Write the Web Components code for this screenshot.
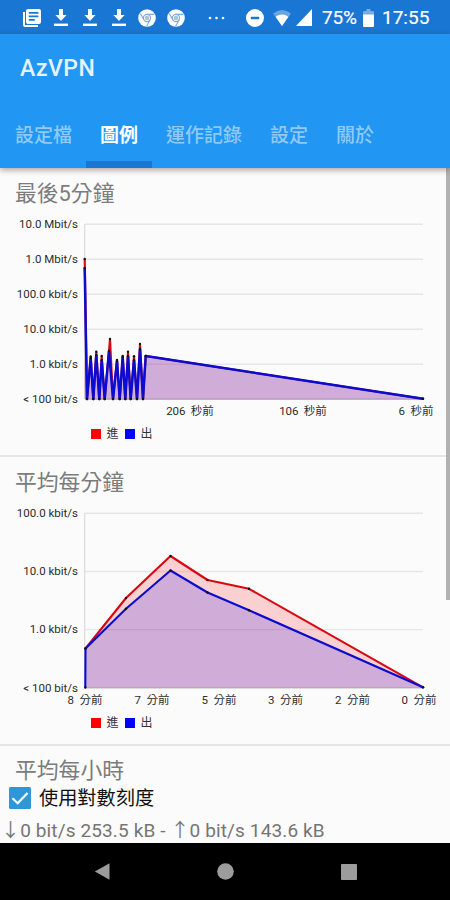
<!DOCTYPE html>
<html lang="zh-Hant">
<head>
<meta charset="utf-8">
<title>AzVPN</title>
<style>
    html, body {
        margin: 0;
        height: 100%;
        overflow: hidden;
    }

    body {
        background: #fbfbfb;
        font-family: Roboto, "Noto Sans CJK TC", sans-serif;
    }
</style>
</head>
<body>
<vpn-app></vpn-app>

<script>
class StatusBar extends HTMLElement {
    constructor() {
        super();
        this.root = this.attachShadow({ mode: 'open' });

        const download = `
            <svg class='download' width='14' height='20' viewBox='0 0 14 20'>
                <path d='M5 1h4v6h3.6L7 13 1.4 7H5z'/><path d='M0 15.6h14V18H0z'/>
            </svg>`;
        const chrome = `
            <svg class='chrome' width='18' height='18' viewBox='0 0 18 18'>
                <circle cx='9' cy='9' r='8.8'/>
                <g fill='none' stroke='#7fa9d6' stroke-width='1.1'>
                    <circle cx='9' cy='9' r='3.6'/>
                    <path d='M9 5.4h7.4M5.9 10.8 2.3 4.6M12.1 10.8 8.6 17.2'/>
                </g>
                <circle cx='9' cy='9' r='2.3' fill='#a9c3df'/>
            </svg>`;

        this.root.innerHTML = `
            <style>
                :host {
                    display: flex;
                    align-items: center;
                    flex: none;
                    height: 34px;
                    padding: 1px 0 0 23px;
                    box-sizing: border-box;
                    background: #1976d2;
                    color: #fff;
                    font-size: 19px;
                    line-height: 20px;
                    -webkit-text-stroke: 0.2px #fff;
                }

                svg { flex: none; fill: #fff; }
                .news { margin-right: 13px; }
                .download { margin-right: 15px; }
                .download.last { margin-right: 12px; }
                .chrome { margin-right: 11px; }
                .dots { margin: 0 21px 0 12px; }
                .dnd { margin-right: 9px; }
                .wifi { margin-right: 5px; }
                .signal { margin-right: 10px; }
                .percent { width: 41px; letter-spacing: -0.2px; }
                .battery { margin-right: 8px; }
            </style>

            <svg class='news' width='18' height='18' viewBox='0 0 18 18'>
                <path d='M0 3h2v13h13v2H2q-2 0-2-2z'/>
                <path fill-rule='evenodd' d='M5 0h11q2 0 2 2v11q0 2-2 2H5q-2 0-2-2V2q0-2 2-2zm.8 3v1.8h9.6V3zm0 3.6v1.6h9.6V6.6zm0 3.5v1.6h6v-1.6z'/>
            </svg>
            ${download}${download}${download.replace("'download'", "'download last'")}${chrome}${chrome}
            <svg class='dots' width='17' height='4' viewBox='0 0 17 4'>
                <circle cx='2' cy='2' r='1.3'/><circle cx='8.5' cy='2' r='1.3'/><circle cx='15' cy='2' r='1.3'/>
            </svg>
            <svg class='dnd' width='18' height='18' viewBox='0 0 18 18'>
                <path fill-rule='evenodd' d='M9 0a9 9 0 1 0 0 18A9 9 0 1 0 9 0zM4.8 7.8h8.4v2.4H4.8z'/>
            </svg>
            <svg class='wifi' width='18' height='16' viewBox='0 0 18 16'>
                <path opacity='.35' d='M0 3.5Q9-3.5 18 3.5L9 16z'/>
                <path d='M2.6 6.7Q9 2.3 15.4 6.7L9 16z'/>
            </svg>
            <svg class='signal' width='16' height='17' viewBox='0 0 16 17'>
                <path d='M16 0v17H0z'/>
            </svg>
            <span class='percent'>75%</span>
            <svg class='battery' width='11' height='18' viewBox='0 0 11 18'>
                <path opacity='.4' d='M3.5 0h4v2H10q1 0 1 1v3H0V3q0-1 1-1h2.5z'/>
                <path d='M0 5.5h11V17q0 1-1 1H1q-1 0-1-1z'/>
            </svg>
            <span>17:55</span>
        `;
    }
}

class AppBar extends HTMLElement {
    constructor() {
        super();
        this.root = this.attachShadow({ mode: 'open' });
        this.root.innerHTML = `
            <style>
                :host {
                    display: flex;
                    flex-direction: column;
                    flex: none;
                    height: 133.5px;
                    background: #2196f3;
                    box-shadow: 0 2px 6px rgba(60, 30, 20, 0.4);
                    position: relative;
                    z-index: 1;
                }

                h1 {
                    margin: 0;
                    padding: 0 20px;
                    font-size: 23px;
                    font-weight: 500;
                    line-height: 70px;
                    letter-spacing: 0.5px;
                    color: #e4f3fe;
                }

                nav {
                    display: flex;
                    flex: 1;
                    padding-left: 1px;
                }
            </style>

            <h1><slot name='title'></slot></h1>
            <nav><slot></slot></nav>
        `;
    }
}

class AppTab extends HTMLElement {
    constructor() {
        super();
        this.root = this.attachShadow({ mode: 'open' });
        this.root.innerHTML = `
            <style>
                :host {
                    display: block;
                    padding: 0 14px;
                    font-size: 19px;
                    font-weight: 500;
                    line-height: 63px;
                    white-space: nowrap;
                    color: #90caf9;
                }

                :host([selected]) {
                    box-shadow: inset 0 -7px #1976d2;
                    font-weight: 700;
                    color: #fff;
                }
            </style>

            <slot></slot>
        `;
    }
}

class ChartCard extends HTMLElement {
    constructor() {
        super();
        this.root = this.attachShadow({ mode: 'open' });
        this.root.innerHTML = `
            <style>
                :host {
                    display: flex;
                    flex-direction: column;
                    flex: none;
                    box-sizing: border-box;
                    border-bottom: 2px solid #e6e6e6;
                }

                h2 {
                    margin: 0;
                    padding: 0 15px;
                    font-size: 21.8px;
                    font-weight: 400;
                    line-height: 32px;
                    color: #7c7c7c;
                }
            </style>

            <h2><slot name='title'></slot></h2>
            <slot></slot>
        `;
    }
}

// Plot area of both charts, y is relative to the top grid line
const LEFT = 85;
const RIGHT = 423;
const TOP = 14;

const CHARTS = {
    minutes: {
        height: 175,
        stroke: 2.5,
        rows: ['10.0 Mbit/s', '1.0 Mbit/s', '100.0 kbit/s', '10.0 kbit/s', '1.0 kbit/s', '< 100 bit/s'],
        columns: [[190, '206 秒前'], [303, '106 秒前'], [416, '6 秒前']],
        incoming: [
            [84.7, 35], [87, 175], [90.7, 132.5], [93.3, 175], [96.3, 127.7], [99.3, 175], [101.7, 132],
            [104.7, 175], [110, 115], [113, 175], [117, 136], [119.7, 175], [122.7, 132], [125.3, 175],
            [128, 127.7], [130.7, 175], [134, 132.3], [137, 175], [140, 120], [143, 175], [145.7, 132], [423, 174.8]
        ],
        outgoing: [
            [84.7, 44], [87, 175], [90.7, 134], [93.3, 175], [96.3, 131], [99.3, 175], [101.7, 136],
            [104.7, 175], [109, 127], [113, 175], [117, 137], [119.7, 175], [122.7, 133], [125.3, 175],
            [128, 132], [130.7, 175], [134, 136], [137, 175], [140, 125], [143, 175], [145.7, 132], [423, 174.8]
        ]
    },
    average: {
        height: 174.5,
        stroke: 2.1,
        rows: ['100.0 kbit/s', '10.0 kbit/s', '1.0 kbit/s', '< 100 bit/s'],
        columns: [[85, '8 分前'], [152, '7 分前'], [219, '5 分前'], [285.5, '3 分前'], [352.5, '2 分前'], [419, '0 分前']],
        incoming: [[85.5, 135.5], [126, 85], [170.5, 43], [207.5, 67], [249, 75.8], [423, 174.3]],
        outgoing: [[85.3, 174.5], [85.5, 135.5], [126, 95.8], [170.5, 57.5], [207.5, 79.5], [249, 97.3], [423, 174.3]]
    }
};

class TrafficChart extends HTMLElement {
    constructor() {
        super();
        this.root = this.attachShadow({ mode: 'open' });
    }

    connectedCallback() {
        const { height, stroke, rows, columns, incoming, outgoing } = CHARTS[this.getAttribute('data')];
        const bottom = TOP + height;
        const step = height / (rows.length - 1);

        const points = function(series) {
            return series.map(([x, y]) => `${x},${y + TOP}`).join(' ');
        };
        const area = function(series, color) {
            return `
                <polygon fill='${color}' fill-opacity='.17' points='${series[0][0]},${bottom} ${points(series)} ${RIGHT},${bottom}'/>`;
        };
        const line = function(series, color, width) {
            return `<polyline fill='none' stroke='${color}' stroke-width='${width}' stroke-linejoin='bevel' points='${points(series)}'/>`;
        };
        const dots = function(series) {
            return series.map(([x, y]) => `<circle cx='${x}' cy='${y + TOP}' r='1.2' fill='#111'/>`).join('');
        };

        const grid = rows.map((label, i) => {
            const y = TOP + i * step;
            return `
                <path d='M${LEFT} ${y + 0.3}H${RIGHT}' stroke='#e6e6e6' stroke-width='1.4'/>
                <text x='78' y='${y + 4}' text-anchor='end'>${label.replace('<', '&lt;')}</text>`;
        }).join('');
        const labels = columns.map(([x, label]) =>
            `<text class='column' x='${x}' y='${bottom + 16}' text-anchor='middle'>${label}</text>`).join('');

        this.root.innerHTML = `
            <style>
                :host { display: block; }

                svg { display: block; }

                text {
                    font-size: 11.5px;
                    fill: #2c2c2c;
                }

                .column { word-spacing: 2.5px; }

                .legend {
                    display: flex;
                    align-items: center;
                    height: 24px;
                    padding-left: 91px;
                    font-size: 12px;
                    line-height: 24px;
                    color: #333;
                }

                .legend i {
                    width: 9.5px;
                    height: 9.5px;
                    margin-right: 6px;
                }

                .legend span { width: 18.5px; }
            </style>

            <svg width='450' height='${Math.round(bottom) + 23}'>
                ${grid}
                <path d='M${LEFT - 0.3} ${TOP}V${bottom}' stroke='#d6d6d6'/>
                ${area(incoming, '#f00')}
                ${area(outgoing, '#00f')}
                <path d='M${LEFT} ${bottom + 0.3}H${RIGHT}' stroke='#9a8ba3' stroke-width='.7'/>
                ${line(incoming, '#d80812', 2.1)}${dots(incoming)}
                ${line(outgoing, '#0c0cd0', stroke)}${dots(outgoing)}
                ${labels}
            </svg>
            <div class='legend'>
                <i style='background: #f00'></i><span>進</span>
                <i style='background: #00f'></i><span>出</span>
            </div>
        `;
    }
}

class CheckOption extends HTMLElement {
    constructor() {
        super();
        this.root = this.attachShadow({ mode: 'open' });
        this.root.innerHTML = `
            <style>
                :host {
                    display: flex;
                    align-items: center;
                    flex: none;
                    height: 32px;
                    padding-left: 9px;
                    font-size: 19.2px;
                    line-height: 30px;
                    color: #111;
                }

                svg { margin-right: 8px; }

                span { padding-top: 2px; }
            </style>

            <svg width='22' height='22' viewBox='0 0 22 22'>
                <rect width='22' height='22' rx='1.5' fill='#2e97d8'/>
                <path d='M3.5 11.2 8.7 16.3 18.5 6' fill='none' stroke='#fff' stroke-width='2.2'/>
            </svg>
            <span><slot></slot></span>
        `;
    }
}

class SpeedLine extends HTMLElement {
    constructor() {
        super();
        this.root = this.attachShadow({ mode: 'open' });
        this.root.innerHTML = `
            <style>
                :host {
                    display: block;
                    flex: none;
                    height: 29px;
                    padding-left: 1px;
                    font-size: 19px;
                    line-height: 33px;
                    letter-spacing: 0.13px;
                    white-space: nowrap;
                    color: #757575;
                }
            </style>

            <slot></slot>
        `;
    }
}

class NavBar extends HTMLElement {
    constructor() {
        super();
        this.root = this.attachShadow({ mode: 'open' });
        this.root.innerHTML = `
            <style>
                :host {
                    display: flex;
                    align-items: center;
                    justify-content: space-between;
                    flex: none;
                    height: 57px;
                    padding: 0 93px 0 94px;
                    box-sizing: border-box;
                    background: #000;
                }

                svg { fill: #9c9c9c; }
            </style>

            <svg width='16' height='17' viewBox='0 0 16 17'><path d='M15.5 .3v16.4L.8 8.5z'/></svg>
            <svg width='17' height='17' viewBox='0 0 17 17'><circle cx='8.5' cy='8.5' r='8.3'/></svg>
            <svg width='16' height='16' viewBox='0 0 16 16'><rect width='16' height='16' rx='1'/></svg>
        `;
    }
}

class VpnApp extends HTMLElement {
    constructor() {
        super();
        this.root = this.attachShadow({ mode: 'open' });
        this.root.innerHTML = `
            <style>
                :host {
                    display: flex;
                    flex-direction: column;
                    width: 450px;
                    height: 900px;
                    overflow: hidden;
                }

                main {
                    display: flex;
                    flex-direction: column;
                    flex: 1;
                    min-height: 0;
                    padding-top: 10.5px;
                    overflow: hidden;
                    position: relative;
                }

                .first { height: 279px; margin-bottom: 10px; }
                .second { height: 279px; margin-bottom: 8.5px; }
                .third { height: 27px; border: 0; }

                .scrollbar {
                    position: absolute;
                    top: 0;
                    right: 0;
                    width: 4px;
                    height: 432px;
                    background: #b1b1b1;
                }
            </style>

            <status-bar></status-bar>
            <app-bar>
                <span slot='title'>AzVPN</span>
                <app-tab>設定檔</app-tab>
                <app-tab selected>圖例</app-tab>
                <app-tab>運作記錄</app-tab>
                <app-tab>設定</app-tab>
                <app-tab>關於</app-tab>
            </app-bar>
            <main>
                <chart-card class='first'>
                    <span slot='title'>最後5分鐘</span>
                    <traffic-chart data='minutes'></traffic-chart>
                </chart-card>
                <chart-card class='second'>
                    <span slot='title'>平均每分鐘</span>
                    <traffic-chart data='average'></traffic-chart>
                </chart-card>
                <chart-card class='third'>
                    <span slot='title'>平均每小時</span>
                </chart-card>
                <div class='scrollbar'></div>
            </main>
            <check-option>使用對數刻度</check-option>
            <speed-line>↓0 bit/s 253.5 kB - ↑0 bit/s 143.6 kB</speed-line>
            <nav-bar></nav-bar>
        `;
    }
}

customElements.define('status-bar', StatusBar);
customElements.define('app-bar', AppBar);
customElements.define('app-tab', AppTab);
customElements.define('chart-card', ChartCard);
customElements.define('traffic-chart', TrafficChart);
customElements.define('check-option', CheckOption);
customElements.define('speed-line', SpeedLine);
customElements.define('nav-bar', NavBar);
customElements.define('vpn-app', VpnApp);
</script>
</body>
</html>
